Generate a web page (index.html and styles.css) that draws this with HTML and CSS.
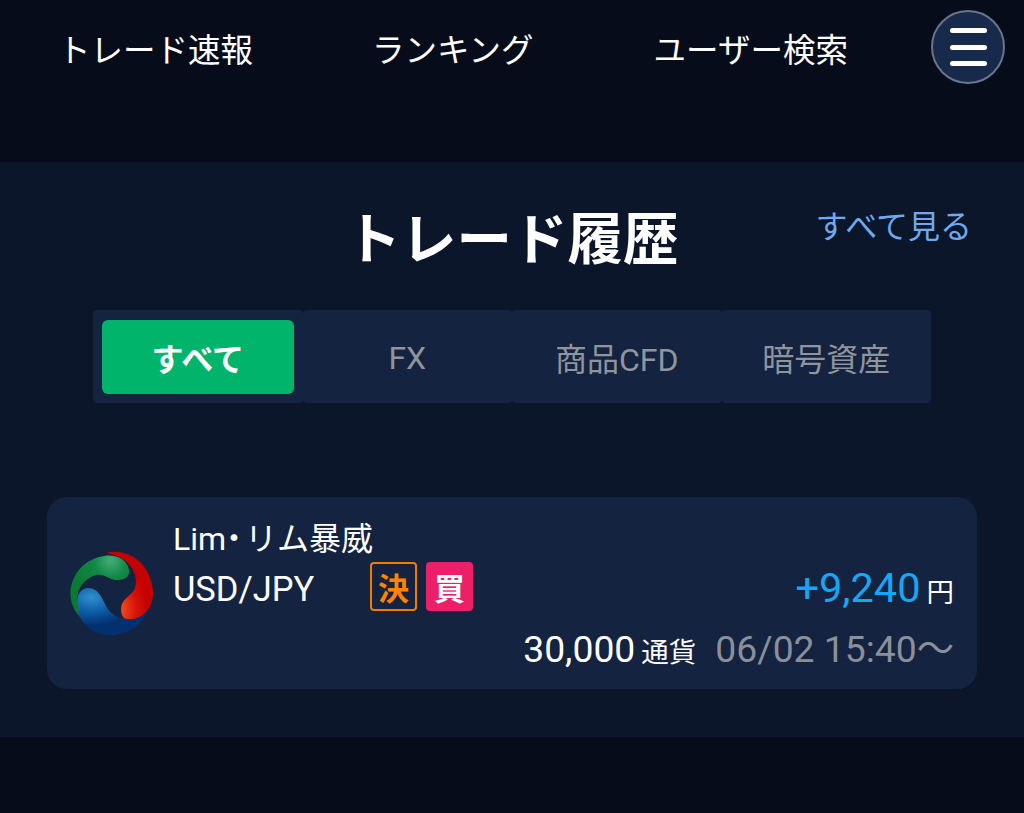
FILE: index.html
```html
<!DOCTYPE html>
<html lang="ja">
<head>
    <meta charset="UTF-8">
    <meta name="viewport" content="width=device-width, initial-scale=1.0">
    <title>トレード履歴</title>
    <link rel="stylesheet" href="styles.css">
</head>
<body>
    <!-- Top navigation -->
    <header class="top-nav">
        <a class="nav-link nav-news">トレード速報</a>
        <a class="nav-link nav-rank">ランキング</a>
        <a class="nav-link nav-user">ユーザー検索</a>
        <button class="menu-button" aria-label="menu">
            <span></span><span></span><span></span>
        </button>
    </header>

    <section class="history">
        <div class="history-head">
            <h1>トレード履歴</h1>
            <a class="see-all">すべて見る</a>
        </div>

        <div class="tabs">
            <div class="tab tab-first"><span class="tab-active">すべて</span></div>
            <div class="tab tab-latin">FX</div>
            <div class="tab">商品CFD</div>
            <div class="tab">暗号資産</div>
        </div>

        <!-- Trade card -->
        <article class="trade-card">
            <svg class="trader-logo" viewBox="0 0 100 95" aria-hidden="true">
                <defs>
                    <radialGradient id="logo-green" cx="0.68" cy="0.08" r="0.7">
                        <stop offset="0" stop-color="#4aab78"/>
                        <stop offset="0.4" stop-color="#0f8a45"/>
                        <stop offset="1" stop-color="#0a7a30"/>
                    </radialGradient>
                    <radialGradient id="logo-red" cx="0.3" cy="0.85" r="0.6">
                        <stop offset="0" stop-color="#f4501f"/>
                        <stop offset="0.6" stop-color="#d5110a"/>
                        <stop offset="1" stop-color="#c40000"/>
                    </radialGradient>
                    <radialGradient id="logo-blue" cx="0.2" cy="0.2" r="0.75">
                        <stop offset="0" stop-color="#2f8fcc"/>
                        <stop offset="0.4" stop-color="#0d5fa8"/>
                        <stop offset="0.8" stop-color="#03306f"/>
                    </radialGradient>
                </defs>
                <path fill="url(#logo-blue)" d="M20 72C15 58 16 45 27 43C36 42 41 50 45 59C49 68 57 74 68 74C77 74 84 68 89 62C85 76 73 86 60 89C44 93 27 87 20 72Z"/>
                <path fill="url(#logo-red)" d="M46 8C60 4 78 10 87 26C95 41 95 56 87 66C81 73 73 75 66 74C61 73 60 64 62 59C65 52 72 50 75 43C78 33 74 22 63 14C58 11 52 9 46 8Z"/>
                <path fill="url(#logo-green)" d="M20 72C12 64 9 52 11 42C14 27 25 14 44 11C56 9 67 14 69 25C70 32 64 35 57 35C50 35 44 28 36 30C26 33 20 40 18 48C16 56 18 65 20 72Z"/>
            </svg>
            <div class="trade-body">
                <div class="trader-name">Lim<span class="name-dot">・</span>リム暴威</div>
                <div class="trade-row">
                    <span class="pair">USD/JPY</span>
                    <span class="badge badge-close">決</span>
                    <span class="badge badge-buy">買</span>
                    <span class="profit">+9,240<small>円</small></span>
                </div>
                <div class="trade-meta">
                    <span class="lots">30,000<small>通貨</small></span>
                    <span class="trade-time">06/02 15:40〜</span>
                </div>
            </div>
        </article>
    </section>
</body>
</html>
```

FILE: styles.css
```css
* {
    box-sizing: border-box;
}
html, body {
    height: 100%;
}
body {
    margin: 0;
    background-color: #070c1a;
    color: #fff;
    font-family: Roboto, "Noto Sans CJK JP", sans-serif;
}
.top-nav {
    display: flex;
    align-items: center;
    height: 94px;
    padding: 0 19px 0 58px;
}
.nav-link {
    font-size: 32.5px;
    white-space: nowrap;
}
.nav-rank {
    margin-left: 119px;
}
.nav-user {
    margin-left: 120px;
}
.menu-button {
    display: flex;
    flex-direction: column;
    justify-content: center;
    align-items: center;
    gap: 11.5px;
    width: 74px;
    height: 74px;
    margin-left: auto;
    padding: 0;
    border: 2px solid #69758a;
    border-radius: 50%;
    background-color: #182a4b;
}
.menu-button span {
    display: block;
    width: 37px;
    height: 5px;
    border-radius: 3px;
    background-color: #fff;
}
.history {
    height: 575px;
    margin-top: 68px;
    padding-top: 39px;
    background-color: #0c162b;
}
.history-head {
    position: relative;
    height: 109px;
    text-align: center;
}
.history-head h1 {
    margin: 0;
    font-size: 55.5px;
    font-weight: 700;
    line-height: 80px;
}
.see-all {
    position: absolute;
    top: 3px;
    right: 52px;
    font-size: 32px;
    line-height: 46px;
    color: #6fa8ee;
}
.tabs {
    display: grid;
    grid-template-columns: repeat(4, 1fr);
    width: 838px;
    height: 93px;
    margin-left: 93px;
}
.tab {
    display: flex;
    justify-content: center;
    align-items: center;
    border-radius: 4px;
    background-color: #14233f;
    font-size: 32px;
    color: #8f949d;
}
.tab-latin {
    padding-top: 3px;
}
.tab-first {
    padding: 10px 9px 9px;
}
.tab-active {
    display: flex;
    justify-content: center;
    align-items: center;
    width: 100%;
    height: 100%;
    border-radius: 6px;
    background-color: #00b46c;
    font-weight: 700;
    color: #fff;
}
.trade-card {
    display: flex;
    align-items: flex-start;
    width: 930px;
    height: 192px;
    margin: 94px 0 0 47px;
    padding: 18px 23px 0 13px;
    border-radius: 20px;
    background-color: #14233f;
}
.trader-logo {
    flex: none;
    width: 100px;
    height: 95px;
    margin: 30px 13px 0 0;
}
.trade-body {
    flex: 1;
    min-width: 0;
}
.trader-name {
    font-size: 32px;
    line-height: 48px;
    white-space: nowrap;
    margin-bottom: 1px;
}
.name-dot {
    margin: 0 3px 0 0;
    font-feature-settings: "palt";
}
.trade-row {
    display: flex;
    align-items: center;
    height: 50px;
}
.pair {
    width: 197px;
    font-size: 34.5px;
}
.badge {
    display: flex;
    justify-content: center;
    align-items: center;
    align-self: flex-start;
    width: 47px;
    height: 49px;
    margin-top: -2px;
    border-radius: 4px;
    font-size: 31px;
    font-weight: 700;
}
.badge-close {
    border: 2.5px solid #f07d00;
    color: #ff8200;
}
.badge-buy {
    margin-left: 9px;
    background-color: #ec1f68;
}
.profit {
    margin-left: auto;
    margin-bottom: 3px;
    font-size: 41.5px;
    color: #12a8f8;
}
small {
    font-size: 27.5px;
    color: #fff;
}
.profit small {
    margin-left: 6px;
}
.trade-meta {
    display: flex;
    justify-content: flex-end;
    align-items: baseline;
    margin-top: 5px;
    font-size: 37.3px;
    white-space: nowrap;
}
.lots small {
    margin-left: 6px;
}
.trade-time {
    margin-left: 19px;
    color: #8a8f99;
}
```
